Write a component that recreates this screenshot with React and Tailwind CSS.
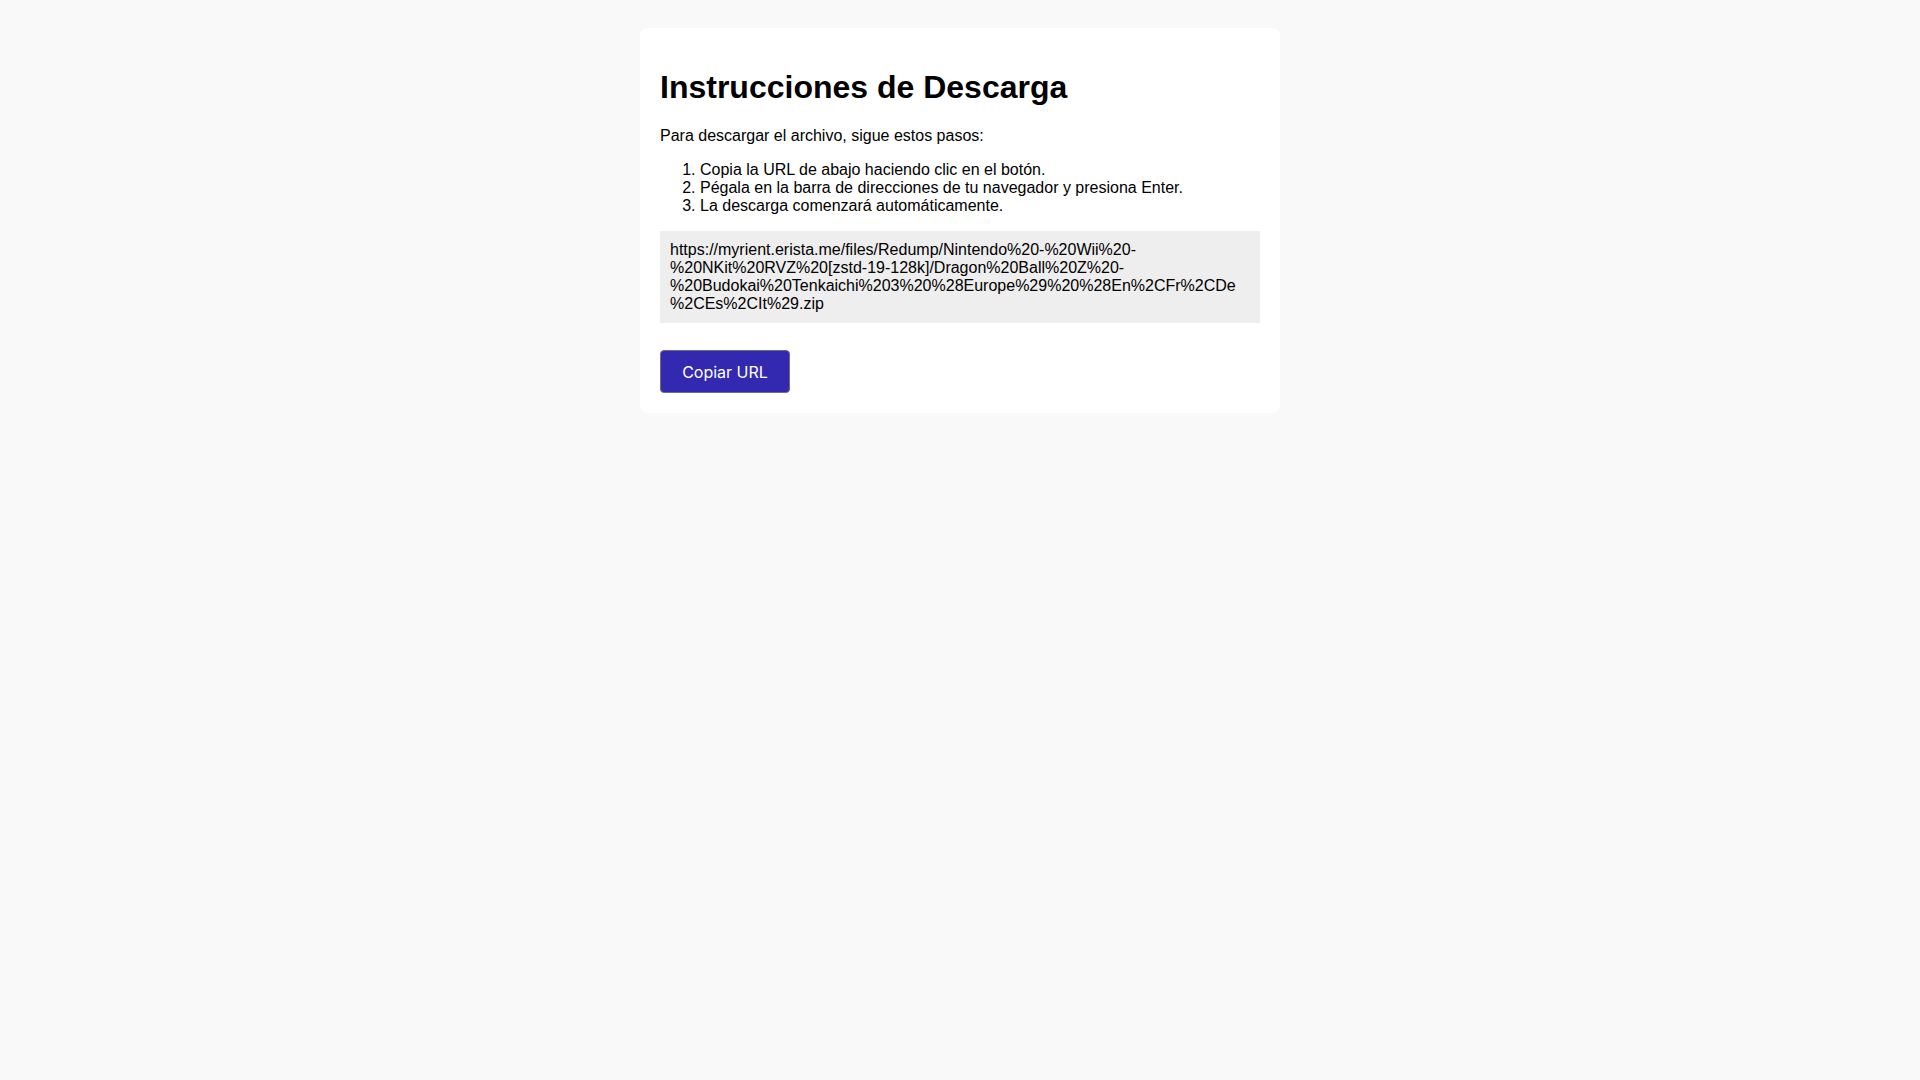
const url =
  "https://myrient.erista.me/files/Redump/Nintendo%20-%20Wii%20-%20NKit%20RVZ%20[zstd-19-128k]/Dragon%20Ball%20Z%20-%20Budokai%20Tenkaichi%203%20%28Europe%29%20%28En%2CFr%2CDe%2CEs%2CIt%29.zip";

const App = () => {
  return (
    <div className="min-h-screen bg-[#f9f9f9] pt-[28px] font-['Liberation_Sans',Arial,sans-serif] text-black">
      <div className="mx-auto w-[640px] rounded-lg bg-white p-5">
        <h1 className="mt-[21px] text-[32px] font-bold leading-[normal]">Instrucciones de Descarga</h1>
        <p className="mt-[21px] text-base leading-[normal]">Para descargar el archivo, sigue estos pasos:</p>
        <ol className="mt-4 list-decimal pl-10 text-base leading-[normal]">
          <li>Copia la URL de abajo haciendo clic en el botón.</li>
          <li>Pégala en la barra de direcciones de tu navegador y presiona Enter.</li>
          <li>La descarga comenzará automáticamente.</li>
        </ol>
        <div className="mt-4 bg-[#eeeeee] py-[10px] pl-[10px] pr-[14px] text-base leading-[normal] break-words">
          {url}
        </div>
        <button
          type="button"
          className="mt-[27px] flex h-[43px] w-[130px] items-center justify-center rounded border border-[#6b6a8f] bg-[#3328b0] font-['Inter',sans-serif] text-base text-white"
        >
          Copiar URL
        </button>
      </div>
    </div>
  );
};

export default App;
